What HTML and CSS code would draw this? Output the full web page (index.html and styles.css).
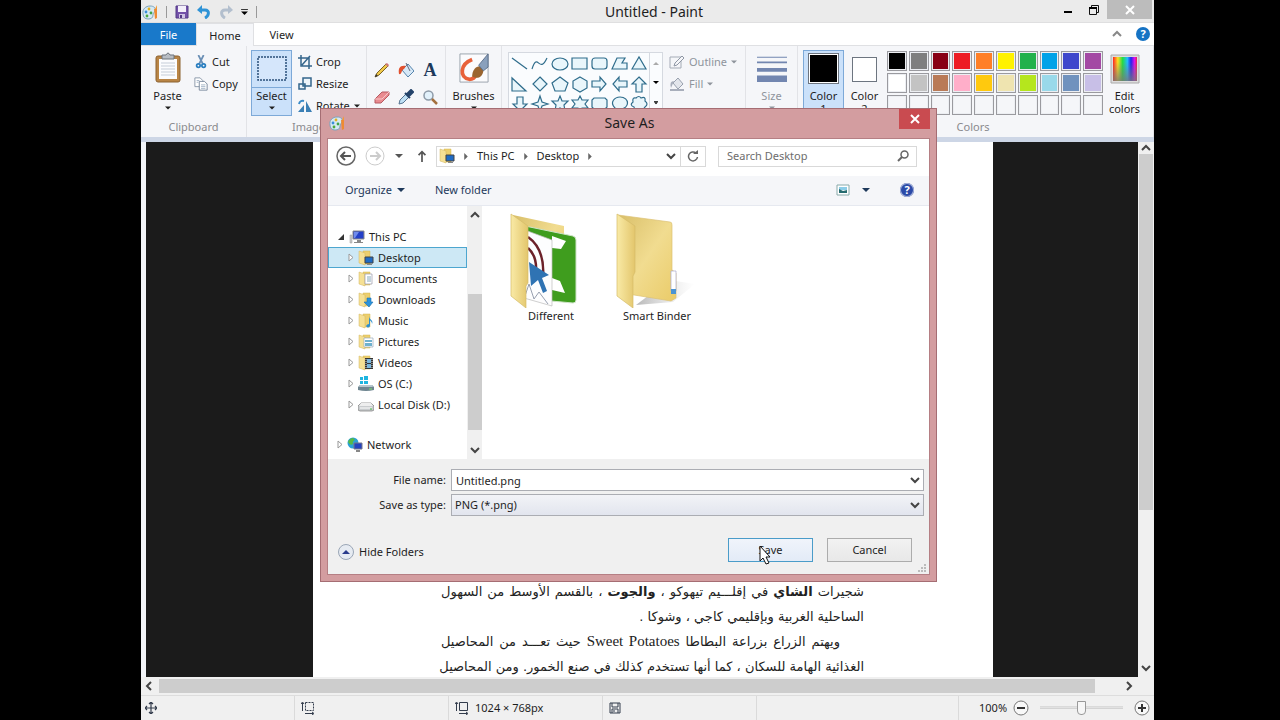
FILE: index.html
```html
<!DOCTYPE html>
<html lang="en">

	<head>
		<meta charset="UTF-8">
		<title>Untitled - Paint</title>
		<link rel="stylesheet" href="styles.css">
	</head>

	<body>
		<!-- shared icons -->
		<svg class="defs" aria-hidden="true">
			<defs>
				<linearGradient id="fold" x1="0" y1="0" x2="1" y2="0">
					<stop offset="0" stop-color="#f9eaa6" />
					<stop offset="1" stop-color="#e3c66c" />
				</linearGradient>
				<linearGradient id="foldBack" x1="0" y1="0" x2="1" y2="1">
					<stop offset="0" stop-color="#d9bf69" />
					<stop offset=".5" stop-color="#f1dc90" />
					<stop offset="1" stop-color="#eacb68" />
				</linearGradient>
				<linearGradient id="rainbow">
					<stop offset="0" stop-color="#f22" />
					<stop offset=".2" stop-color="#fd2" />
					<stop offset=".4" stop-color="#2d4" />
					<stop offset=".6" stop-color="#2bf" />
					<stop offset=".75" stop-color="#22e" />
					<stop offset=".9" stop-color="#d1e" />
					<stop offset="1" stop-color="#e24" />
				</linearGradient>
				<linearGradient id="fade" x1="0" y1="0" x2="0" y2="1">
					<stop offset=".2" stop-color="#777" stop-opacity="0" />
					<stop offset="1" stop-color="#777" stop-opacity=".8" />
				</linearGradient>
				<linearGradient id="shade" x1="0" y1="0" x2="1" y2="0">
					<stop offset="0" stop-color="#999" stop-opacity=".7" />
					<stop offset="1" stop-color="#ccc" stop-opacity="0" />
				</linearGradient>
			</defs>
			<symbol id="palette" viewBox="0 0 16 16">
				<path d="M1 10C0 5 4 2 8 2c4 0 6 2 5 5-1 2-2 2-2 4 0 3-2 4-5 4-3 0-5-2-5-5z" fill="#d5e9f3" stroke="#7aa3bd" />
				<circle cx="4" cy="8" r="1.4" fill="#3a8ed8" />
				<circle cx="7" cy="5" r="1.4" fill="#e0b020" />
				<circle cx="5" cy="12" r="1.4" fill="#4aa83c" />
				<circle cx="9" cy="9" r="1.4" fill="#3fa34a" />
				<path d="M13 5l2-4v4z" fill="#f29b38" />
				<path d="M12 5h3v9l-2 1z" fill="#ef8b32" />
			</symbol>
			<symbol id="chev" viewBox="0 0 10 10"><path d="M1 3l4 4 4-4" fill="none" stroke="#444" stroke-width="2" /></symbol>
			<symbol id="caret" viewBox="0 0 8 4"><path d="M0 0h8L4 4z" fill="currentColor" /></symbol>
			<symbol id="closed" viewBox="0 0 6 9"><path d="M1 1l4 3.500-4 3.500z" fill="#fff" stroke="#999" /></symbol>
			<symbol id="folder" viewBox="0 0 16 16">
				<path d="M5 1h7v13H5z" fill="#eccf6e" stroke="#d4b451" stroke-width=".5" />
				<path d="M1 1l6 2v12l-6-2z" fill="#f5e094" stroke="#d2b560" stroke-width=".5" />
			</symbol>
			<symbol id="deskfold" viewBox="0 0 16 16">
				<use href="#folder" />
				<path d="M7 7h8v6H7z" fill="#1f6bc4" stroke="#444" />
				<path d="M9 14h5v1H9z" fill="#888" />
			</symbol>
		</svg>

		<div class="paint">
			<header class="titlebar">
				<div class="quick">
					<svg class="i16"><use href="#palette" /></svg>
					<i class="bar"></i>
					<button aria-label="Save file"><svg viewBox="0 0 14 14" class="i14"><path d="M1 1h12v12H1z" fill="#7351a8" stroke="#533a86" /><path d="M3 1h8v6H3z" fill="#f3effa" /><path d="M4 9h6v4H4z" fill="#cfc4e3" /><path d="M5 10h2v3H5z" fill="#533a86" /></svg></button>
					<button aria-label="Undo"><svg viewBox="0 0 14 14" class="i14"><path d="M4 5h4c5 0 4 6 0 8" fill="none" stroke="#2f93d6" stroke-width="3" /><path d="M0 5l5-5v9z" fill="#2f93d6" /></svg></button>
					<button aria-label="Redo"><svg viewBox="0 0 14 14" class="i14"><path d="M10 5H6C1 5 2 11 6 13" fill="none" stroke="#b3bfce" stroke-width="3" /><path d="M14 5L9 0v9z" fill="#b3bfce" /></svg></button>
					<button aria-label="Customize"><svg viewBox="0 0 8 7" class="more"><path d="M0 0h8v1H0zM0 3h8L4 7z" /></svg></button>
					<i class="bar"></i>
				</div>
				<h1>Untitled - Paint</h1>
				<div class="sysbtns">
					<button aria-label="Minimize"><svg viewBox="0 0 10 10" class="i10"><path d="M1 6h8v2H1z" /></svg></button>
					<button aria-label="Restore"><svg viewBox="0 0 12 12" class="i12"><path d="M1.500 3.500h7v7h-7zM3.500 3V1.500h7v7H9" fill="none" stroke="#111" /><path d="M1 3h8v2H1z" /></svg></button>
					<button class="quit" aria-label="Close"><svg viewBox="0 0 10 10" class="i10"><path d="M1 1l8 8M9 1L1 9" stroke="#fff" stroke-width="2" /></svg></button>
				</div>
			</header>

			<nav class="tabs">
				<button class="file">File</button>
				<button class="on">Home</button>
				<button>View</button>
				<span class="tabs-end">
					<svg viewBox="0 0 10 10" class="i10"><path d="M1 7l4-4 4 4" fill="none" stroke="#888" stroke-width="2" /></svg>
					<button class="help" aria-label="Help">?</button>
				</span>
			</nav>

			<section class="ribbon">
				<div class="group g-clip">
					<div class="tools">
						<button class="big">
							<svg viewBox="0 0 26 32" class="pic"><rect x="1" y="4" width="24" height="26" rx="2" fill="#b98546" stroke="#8c6231" /><path d="M4 7h18v20H4z" fill="#fbfcfe" /><path d="M6 11h14M6 14h14M6 17h14M6 20h14M6 23h14" stroke="#c5cdd8" /><path d="M7 3h4q2-4 4 0h4v4H7z" fill="#b8bdc4" stroke="#6d747c" /></svg>
							<span>Paste</span>
							<svg class="caret"><use href="#caret" /></svg>
						</button>
						<div class="rows">
							<button><svg viewBox="0 0 14 16" class="i14"><path d="M4 0l5 10M10 0L5 10" stroke="#6b8fb5" stroke-width="2" /><circle cx="4" cy="12" r="2" fill="none" stroke="#2b7fc0" stroke-width="2" /><circle cx="10" cy="12" r="2" fill="none" stroke="#2b7fc0" stroke-width="2" /></svg>Cut</button>
							<button><svg viewBox="0 0 16 16" class="i14"><path d="M1 1h6l3 3v7H1z" fill="#fff" stroke="#8391a3" /><path d="M6 5h6l3 3v7H6z" fill="#fff" stroke="#708096" /><path d="M8 9h5M8 11h5M8 13h5M3 4h3M3 6h2" stroke="#9fb0c4" /></svg>Copy</button>
						</div>
					</div>
					<h2>Clipboard</h2>
				</div>

				<div class="group g-image">
					<div class="tools">
						<button class="big picked split">
							<svg viewBox="0 0 30 32" class="pic"><path d="M1 5h28v23H1z" fill="#d5e6fb" stroke="#2a4f7a" stroke-width="1.500" stroke-dasharray="2 1" /></svg>
							<span>Select</span>
							<svg class="caret"><use href="#caret" /></svg>
						</button>
						<div class="rows">
							<button><svg viewBox="0 0 14 14" class="i14"><path d="M3 0v11h11M0 3h11v11M4 10l8-9" fill="none" stroke="#35668c" stroke-width="1.500" /></svg>Crop</button>
							<button><svg viewBox="0 0 14 14" class="i14"><path d="M5 1h8v8H5zM1 7h6v5H1z" fill="#eef5fb" stroke="#35668c" stroke-width="1.500" /></svg>Resize</button>
							<button><svg viewBox="0 0 14 14" class="i14"><path d="M0 13h6V6zM8 13V2l6 11z" fill="#3a7fb5" /><path d="M1 5q1-4 5-3" fill="none" stroke="#3a8bc8" stroke-width="2" /></svg>Rotate<svg class="caret"><use href="#caret" /></svg></button>
						</div>
					</div>
					<h2>Image</h2>
				</div>

				<div class="group g-tools">
					<div class="toolgrid">
						<button aria-label="Pencil"><svg viewBox="0 0 16 16" class="i16"><path d="M1 15l2-4L12 2l2 2-9 9z" fill="#f0c94a" stroke="#7c6224" /><path d="M1 15l1-3 2 2z" fill="#333" /><path d="M11 2l2-1 2 2-1 2z" fill="#c77" /></svg></button>
						<button aria-label="Fill with color"><svg viewBox="0 0 16 16" class="i16"><path d="M4 8l6-6 6 7-6 6z" fill="#d6e8f7" stroke="#5684ad" /><path d="M8 1l4 8" stroke="#667" /><path d="M8 4C2 3 0 6 1 12c3 1 2-4 5-5z" fill="#e2512f" /></svg></button>
						<button aria-label="Text" class="letter">A</button>
						<button aria-label="Eraser"><svg viewBox="0 0 16 16" class="i16"><path d="M1 10l7-7 7 0v3l-8 8H1z" fill="#e98b90" stroke="#b65a62" /><path d="M1 10h7l7-7" fill="none" stroke="#f7c6c8" /></svg></button>
						<button aria-label="Color picker"><svg viewBox="0 0 16 16" class="i16"><path d="M1 15l1-4 6-6 3 3-6 6z" fill="#bfe0f5" stroke="#55738f" /><path d="M7 4l5 5M9 5l4-4 2 2-4 4z" fill="#25446b" stroke="#25446b" stroke-width="2" /></svg></button>
						<button aria-label="Magnifier"><svg viewBox="0 0 16 16" class="i16"><circle cx="6.500" cy="6.500" r="4.500" fill="#e2f1fb" stroke="#8d9aa8" stroke-width="1.500" /><path d="M10 10l5 5" stroke="#a4713f" stroke-width="2.500" /></svg></button>
					</div>
				</div>

				<div class="group g-brush">
					<button class="big">
						<svg viewBox="0 0 32 32" class="pic"><path d="M1 1h30v30H1z" fill="#fbfbfd" stroke="#98a0aa" /><path d="M14 7C1 12 0 26 11 28c4 0 6-2 7-5" fill="none" stroke="#e8613a" stroke-width="4" /><path d="M14 25c0-7 4-11 8-11l4 4c0 6-5 11-12 7z" fill="#9a6530" /><path d="M21 13L31 1v14l-5 4z" fill="#8aa0bc" stroke="#5b6f8b" /></svg>
						<span>Brushes</span>
						<svg class="caret"><use href="#caret" /></svg>
					</button>
				</div>

				<div class="group g-shapes">
					<div class="tools">
						<div class="gallery">
							<svg viewBox="0 0 140 62" class="shapes">
								<g fill="#e9f6fb" stroke="#2f6d8c" stroke-width="1.200">
									<path d="M3 5l15 11" />
									<path d="M23 16c6-18 7 6 15-11" fill="none" />
									<ellipse cx="51" cy="11" rx="8" ry="6" />
									<path d="M63 5h15v11H63z" />
									<rect x="83" y="5" width="15" height="11" rx="3" />
									<path d="M103 16l5-11h8l-3 5h5v6z" />
									<path d="M123 16l7-12 7 12z" />
									<path d="M3 25v13h14z" />
									<path d="M31 24l7 7-7 7-7-7z" />
									<path d="M51 24l8 6-3 8H46l-3-8z" />
									<path d="M71 24l7 4v7l-7 4-7-4v-7z" />
									<path d="M83 28h8v-4l6 7-6 7v-4h-8z" />
									<path d="M118 28h-8v-4l-6 7 6 7v-4h8z" />
									<path d="M130 24l7 7h-4v8h-6v-8h-4z" />
									<path d="M8 44h6v7h4l-7 7-7-7h4z" />
									<path d="M31 43l2 6 6 2-6 2-2 6-2-6-6-2 6-2z" />
									<path d="M51 43l2 5h6l-4 4 1 6-5-3-5 3 1-6-4-4h6z" />
									<path d="M71 43l2 4h6l-3 4 3 4h-6l-2 4-2-4h-6l3-4-3-4h6z" />
									<path d="M85 45h11l2 2v7l-2 2h-7l-4 3v-3l-2-2v-7z" />
									<path d="M106 59v-4c-6-6 0-11 5-11 10 0 10 12 0 12z" />
									<path d="M127 45q3-3 5 0 5-2 4 3 4 3 0 6-2 4-6 2-4 3-5-2-5-2-1-5-1-5 3-4z" />
								</g>
							</svg>
							<div class="spin">
								<svg viewBox="0 0 8 4"><path d="M1 4h6L4 1z" fill="#aaa" /></svg>
								<svg viewBox="0 0 8 4"><path d="M1 0h6L4 3z" /></svg>
								<svg viewBox="0 0 8 6"><path d="M1 0h6v1H1zM1 2h6L4 5z" /></svg>
							</div>
						</div>
						<div class="rows faint">
							<button><svg viewBox="0 0 16 16" class="i16"><path d="M1 3h11v11H1z" fill="none" stroke="#a4abb6" /><path d="M5 12l1-3 7-7 2 2-7 7z" fill="#f5f6f9" stroke="#8f97a5" /></svg>Outline<svg class="caret"><use href="#caret" /></svg></button>
							<button><svg viewBox="0 0 16 16" class="i16"><path d="M4 7l5-5 5 6-5 5z" fill="#e2e5eb" stroke="#98a0ae" /><path d="M1 13h14v2H1zM5 5Q0 5 2 12z" fill="#a8aebb" /></svg>Fill<svg class="caret"><use href="#caret" /></svg></button>
						</div>
					</div>
				</div>

				<div class="group g-size">
					<button class="big faint">
						<svg viewBox="0 0 32 32" class="pic"><path d="M0 4h32v1H0zM0 9h32v2H0zM0 16h32v4H0zM0 24h32v7H0z" fill="#7286b0" /></svg>
						<span>Size</span>
						<svg class="caret"><use href="#caret" /></svg>
					</button>
				</div>

				<div class="group g-colors">
					<div class="tools">
						<button class="big picked"><i class="well black"></i><span>Color<br>1</span></button>
						<button class="big"><i class="well small white"></i><span>Color<br>2</span></button>
						<div class="swatches">
							<button class="black" aria-label="Black"></button>
							<button class="gray" aria-label="Gray"></button>
							<button class="darkred" aria-label="Dark red"></button>
							<button class="red" aria-label="Red"></button>
							<button class="orange" aria-label="Orange"></button>
							<button class="yellow" aria-label="Yellow"></button>
							<button class="green" aria-label="Green"></button>
							<button class="turquoise" aria-label="Turquoise"></button>
							<button class="indigo" aria-label="Indigo"></button>
							<button class="purple" aria-label="Purple"></button>
							<button class="white" aria-label="White"></button>
							<button class="lightgray" aria-label="Light gray"></button>
							<button class="brown" aria-label="Brown"></button>
							<button class="rose" aria-label="Rose"></button>
							<button class="gold" aria-label="Gold"></button>
							<button class="lightyellow" aria-label="Light yellow"></button>
							<button class="lime" aria-label="Lime"></button>
							<button class="lightturquoise" aria-label="Light turquoise"></button>
							<button class="bluegray" aria-label="Blue-gray"></button>
							<button class="lavender" aria-label="Lavender"></button>
							<button aria-label="Custom 1"></button>
							<button aria-label="Custom 2"></button>
							<button aria-label="Custom 3"></button>
							<button aria-label="Custom 4"></button>
							<button aria-label="Custom 5"></button>
							<button aria-label="Custom 6"></button>
							<button aria-label="Custom 7"></button>
							<button aria-label="Custom 8"></button>
							<button aria-label="Custom 9"></button>
							<button aria-label="Custom 10"></button>
						</div>
						<button class="big edit">
							<svg viewBox="0 0 30 32" class="pic"><path d="M1 3h28v28H1z" fill="#ddd" stroke="#aaa" /><path d="M3 5h24v24H3z" fill="url(#rainbow)" /><path d="M3 5h24v24H3z" fill="url(#fade)" /></svg>
							<span>Edit<br>colors</span>
						</button>
					</div>
					<h2>Colors</h2>
				</div>
			</section>

			<main class="work">
				<div class="canvas">
					<div class="paper" lang="ar" dir="rtl">
						<p>شجيرات <b>الشاي</b> في إقلـــيم تيهوكو ، <b>والجوت</b> ، بالقسم الأوسط من السهول</p>
						<p class="last">الساحلية الغربية وبإقليمي كاجي ، وشوكا .</p>
						<p class="indent">ويهتم الزراع بزراعة البطاطا <span class="latin">Sweet Potatoes</span> حيث تعـــد من المحاصيل</p>
						<p>الغذائية الهامة للسكان ، كما أنها تستخدم كذلك في صنع الخمور. ومن المحاصيل</p>
					</div>
				</div>
				<div class="vscroll">
					<svg viewBox="0 0 10 10" class="i10"><path d="M1 7l4-4 4 4" fill="none" stroke="#444" stroke-width="2" /></svg>
					<i class="thumb"></i>
					<svg class="i10"><use href="#chev" /></svg>
				</div>
			</main>
			<div class="hscroll">
				<svg viewBox="0 0 10 10" class="i10"><path d="M7 1L3 5l4 4" fill="none" stroke="#444" stroke-width="2" /></svg>
				<i class="thumb"></i>
				<svg viewBox="0 0 10 10" class="i10"><path d="M3 1l4 4-4 4" fill="none" stroke="#444" stroke-width="2" /></svg>
			</div>

			<footer class="status">
				<div class="cell"><svg viewBox="0 0 12 12" class="i12"><path d="M6 0v12M0 6h12M4 2l2-2 2 2M4 10l2 2 2-2M2 4L0 6l2 2M10 4l2 2-2 2" fill="none" stroke="#333c4c" stroke-width="1.200" /></svg></div>
				<div class="cell"><svg viewBox="0 0 14 14" class="i14"><path d="M4.500 1.500h8v8h-8z" fill="none" stroke="#333c4c" stroke-dasharray="2 1" /><path d="M1.500 10V2M0 3l1.500-2L3 3M4 12.500h8M11 11l2 1.500-2 1.500" fill="none" stroke="#333c4c" /></svg></div>
				<div class="cell"><svg viewBox="0 0 14 14" class="i14"><path d="M4.500 1.500h8v8h-8z" fill="none" stroke="#333c4c" /><path d="M1.500 10V2M0 3l1.500-2L3 3M4 12.500h8M11 11l2 1.500-2 1.500" fill="none" stroke="#333c4c" /></svg>1024 × 768px</div>
				<div class="cell"><svg viewBox="0 0 12 12" class="i12"><path d="M1 1h10v10H1zM3 1v4h6V1M3 11V7h6v4M5 8v2" fill="none" stroke="#333c4c" /></svg></div>
				<div class="cell wide"></div>
				<div class="zoom">
					<label for="zoom">100%</label>
					<button class="round" aria-label="Zoom out"><svg viewBox="0 0 16 16" class="i16"><circle cx="8" cy="8" r="7" fill="#f8f8f8" stroke="#777" /><path d="M4 8h8" stroke="#333" stroke-width="2" /></svg></button>
					<input type="range" id="zoom" min="0" max="100" value="50">
					<button class="round" aria-label="Zoom in"><svg viewBox="0 0 16 16" class="i16"><circle cx="8" cy="8" r="7" fill="#f8f8f8" stroke="#777" /><path d="M4 8h8M8 4v8" stroke="#333" stroke-width="2" /></svg></button>
				</div>
			</footer>

			<!-- save dialog -->
			<div class="dialog" role="dialog" aria-labelledby="dlgTitle">
				<div class="dlg-title">
					<svg class="i16"><use href="#palette" /></svg>
					<h2 id="dlgTitle">Save As</h2>
					<button class="close" aria-label="Close dialog"><svg viewBox="0 0 10 10" class="i10"><path d="M1 1l8 8M9 1L1 9" stroke="#fff" stroke-width="2" /></svg></button>
				</div>
				<div class="dlg-body">
					<div class="address">
						<button aria-label="Back"><svg viewBox="0 0 20 20" class="i20"><circle cx="10" cy="10" r="9" fill="#fff" stroke="#666" stroke-width="1.500" /><path d="M15 10H6M9 6l-4 4 4 4" fill="none" stroke="#555" stroke-width="2" /></svg></button>
						<button aria-label="Forward"><svg viewBox="0 0 20 20" class="i20"><circle cx="10" cy="10" r="9" fill="#fff" stroke="#ccc" /><path d="M5 10h9M11 6l4 4-4 4" fill="none" stroke="#ccc" stroke-width="2" /></svg></button>
						<button class="hist" aria-label="Recent locations"><svg class="caret"><use href="#caret" /></svg></button>
						<button class="up" aria-label="Up"><svg viewBox="0 0 12 14" class="i12"><path d="M6 14V2M2 6l4-4 4 4" fill="none" stroke="#555" stroke-width="2" /></svg></button>
						<div class="crumbs">
							<svg class="i16"><use href="#deskfold" /></svg>
							<svg viewBox="0 0 4 8" class="arr"><path d="M0 0l4 4-4 4z" /></svg>
							<a href="#pc">This PC</a>
							<svg viewBox="0 0 4 8" class="arr"><path d="M0 0l4 4-4 4z" /></svg>
							<a href="#desktop">Desktop</a>
							<svg viewBox="0 0 4 8" class="arr"><path d="M0 0l4 4-4 4z" /></svg>
							<svg class="i10 push"><use href="#chev" /></svg>
						</div>
						<button class="reload" aria-label="Refresh"><svg viewBox="0 0 12 12" class="i12"><path d="M9 3a4.500 4.500 0 1 0 1.500 4" fill="none" stroke="#666" stroke-width="1.500" /><path d="M6 4h5V0z" fill="#666" /></svg></button>
						<div class="search">
							<input type="text" placeholder="Search Desktop" aria-label="Search Desktop">
							<svg viewBox="0 0 12 12" class="i12"><circle cx="7.500" cy="4.500" r="3.500" fill="none" stroke="#666" stroke-width="1.500" /><path d="M5 7l-4 4" stroke="#666" stroke-width="2" /></svg>
						</div>
					</div>

					<div class="commands">
						<button>Organize<svg class="caret"><use href="#caret" /></svg></button>
						<button>New folder</button>
						<button class="push" aria-label="Change view"><svg viewBox="0 0 14 12" class="i14"><path d="M1 1h12v10H1z" fill="#fff" stroke="#8aa" /><path d="M3 3h8v3H3z" fill="#8ccde8" /><path d="M3 5l4 2 4-1v3H3z" fill="#256b6f" /></svg></button>
						<button aria-label="More views"><svg class="caret"><use href="#caret" /></svg></button>
						<button class="help dark" aria-label="Dialog help">?</button>
					</div>

					<div class="browse">
						<ul class="tree">
							<li class="root"><svg viewBox="0 0 8 8" class="i8"><path d="M7 1v6H1z" fill="#333" /></svg><svg viewBox="0 0 16 16" class="i16"><path d="M4 2h11v8H4z" fill="#2440c8" stroke="#888" /><path d="M5 3h5l-4 6H5z" fill="#6f8bec" /><path d="M8 11h4v2H8zM5 13h9v1H5z" fill="#888" /><path d="M1 6h2v8H1z" fill="#ccc" stroke="#999" stroke-width=".5" /></svg>This PC</li>
							<li class="sel"><svg class="exp"><use href="#closed" /></svg><svg class="i16"><use href="#deskfold" /></svg>Desktop</li>
							<li><svg class="exp"><use href="#closed" /></svg><svg viewBox="0 0 16 16" class="i16"><use href="#folder" /><path d="M7 3h7v10H7z" fill="#fff" stroke="#99a" stroke-width=".7" /><path d="M9 6h4M9 8h4M9 10h4" stroke="#8ab" /></svg>Documents</li>
							<li><svg class="exp"><use href="#closed" /></svg><svg viewBox="0 0 16 16" class="i16"><use href="#folder" /><path d="M9 6h4v4h2l-4 5-5-5h3z" fill="#2b93dc" stroke="#1c6fae" stroke-width=".6" /></svg>Downloads</li>
							<li><svg class="exp"><use href="#closed" /></svg><svg viewBox="0 0 16 16" class="i16"><use href="#folder" /><path d="M11 3c0 4 5 4 3 8 0-3-2-3-2-4v6q-2 3-4 0 1-2 3-2z" fill="#2b8fd0" /></svg>Music</li>
							<li><svg class="exp"><use href="#closed" /></svg><svg viewBox="0 0 16 16" class="i16"><use href="#folder" /><path d="M6 4h9v9H6z" fill="#fff" stroke="#9ab" stroke-width=".7" /><path d="M7 6h7v2H7zM7 9h7v3H7z" fill="#6fb1cf" /></svg>Pictures</li>
							<li><svg class="exp"><use href="#closed" /></svg><svg viewBox="0 0 16 16" class="i16"><use href="#folder" /><path d="M7 3h8v11H7z" fill="#333" /><path d="M9 4h4v4H9zM9 9h4v4H9z" fill="#79b6dd" /><path d="M8 4v10M14 4v10" stroke="#ddd" stroke-dasharray="1 1" /></svg>Videos</li>
							<li><svg class="exp"><use href="#closed" /></svg><svg viewBox="0 0 16 16" class="i16"><path d="M2 1h3v3H2zM6 0h4v4H6zM2 5h3v3H2zM6 5h4v3H6z" fill="#1fb5e0" /><path d="M2 9h12l2 2v3q-8 2-16 0v-3z" fill="#6e8590" /><path d="M2 9h12l1 2H1z" fill="#b6c6cd" /><path d="M11 13h3" stroke="#7ee06a" /></svg>OS (C:)</li>
							<li><svg class="exp"><use href="#closed" /></svg><svg viewBox="0 0 16 16" class="i16"><path d="M3 6h10l3 3v4l-2 1H2l-2-1V9z" fill="#c9ccce" stroke="#777" stroke-width=".7" /><path d="M3 6h10l2 3H1z" fill="#eee" /><path d="M2 11h12" stroke="#fff" /><path d="M12 12h2" stroke="#4b4" /></svg>Local Disk (D:)</li>
							<li class="root net"><svg class="exp"><use href="#closed" /></svg><svg viewBox="0 0 16 16" class="i16"><circle cx="6" cy="6" r="5.500" fill="#2aa0d8" /><path d="M2 3q4-4 6 0-3 1-2 4-3 2-5-2z" fill="#55b948" /><path d="M7 6h8v6H7z" fill="#2443c0" stroke="#778" /><path d="M9 13h4v2H9z" fill="#888" /></svg>Network</li>
						</ul>
						<div class="vscroll side">
							<svg viewBox="0 0 10 10" class="i10"><path d="M1 7l4-4 4 4" fill="none" stroke="#444" stroke-width="2" /></svg>
							<i class="thumb"></i>
							<svg class="i10"><use href="#chev" /></svg>
						</div>
						<div class="files">
							<figure>
								<svg viewBox="6 0 84 96" class="thumbpic">
									<path d="M10 3l51 11v64H20z" fill="url(#foldBack)" />
									<path d="M22 14l48 10q3 1 3 4v60q0 3-3 3l-44-4z" fill="#3f9d1e" stroke="#cfe3c8" />
									<path d="M49 24l14 5-5 8-9-1zM49 66l8 3 5 12-13-3z" fill="#fff" />
									<path d="M22 18l27 10v66l-28-8z" fill="#fdfdfe" stroke="#bbb" stroke-width=".7" />
									<path d="M25 25q17 12 15 40M25 36q9 8 8 23" fill="none" stroke="#6c2129" stroke-width="2.500" />
									<path d="M26 50l20 13-7 3 5 13-4 2-5-13-7 6z" fill="#2f73b3" />
									<path d="M22 84l4-12 5 15 5-7 9 12" fill="none" stroke="#98a0b0" />
									<path d="M8 2l17 12v57l-2 3v22L8 84z" fill="url(#fold)" stroke="#d6bc69" stroke-width=".7" />
								</svg>
								<figcaption>Different</figcaption>
							</figure>
							<figure>
								<svg viewBox="6 0 84 96" class="thumbpic">
									<path d="M60 68l26 4-22 18-37 3z" fill="url(#shade)" />
									<path d="M9 3l52 7q2 0 2 3v45l4 3v25l-5 3-43-7z" fill="url(#foldBack)" stroke="#dcc274" stroke-width=".7" />
									<path d="M62 59h5v20h-5z" fill="#fff" stroke="#aac" stroke-width=".7" />
									<path d="M62 77h5v5h-5z" fill="#4a94d4" />
									<path d="M8 2l18 12v46l-2 4v32L8 84z" fill="url(#fold)" stroke="#d6bc69" stroke-width=".7" />
								</svg>
								<figcaption>Smart Binder</figcaption>
							</figure>
						</div>
					</div>

					<form class="save">
						<label for="fname">File name:</label>
						<div class="field">
							<input type="text" id="fname" value="Untitled.png">
							<svg class="i10"><use href="#chev" /></svg>
						</div>
						<label for="ftype">Save as type:</label>
						<div class="field type">
							<select id="ftype"><option>PNG (*.png)</option></select>
							<svg class="i10"><use href="#chev" /></svg>
						</div>
					</form>
					<div class="actions">
						<button class="hide"><svg viewBox="0 0 16 16" class="i16"><circle cx="8" cy="8" r="7.500" fill="#e6ebf2" stroke="#9aa6b6" /><path d="M4 10h8L8 6z" fill="#2a3c8c" /></svg>Hide Folders</button>
						<button class="btn default">Save</button>
						<button class="btn">Cancel</button>
					</div>
					<svg viewBox="0 0 8 8" class="grip"><path d="M6 0h2v2H6zM3 3h2v2H3zM6 3h2v2H6zM0 6h2v2H0zM3 6h2v2H3zM6 6h2v2H6z" fill="#bbb" /></svg>
					<svg viewBox="0 0 12 20" class="cursor"><path d="M1 1v15l3-3 3 6 3-1-3-6h4z" fill="#fff" stroke="#111" /></svg>
				</div>
			</div>
		</div>
	</body>

</html>
```
FILE: styles.css
```css
* {
	box-sizing: border-box;
}

body {
	margin: 0;
	background: #000;
	color: #1e1e1e;
	font: 11px/16px "Noto Sans", "Open Sans", sans-serif;
}

h1,
h2,
p,
ul,
figure {
	margin: 0;
	padding: 0;
	font-weight: normal;
}

button {
	display: flex;
	align-items: center;
	padding: 0;
	border: 0;
	background: none;
	color: inherit;
	font: inherit;
}

svg {
	flex: none;
	display: block;
}

.defs {
	position: absolute;
	width: 0;
	height: 0;
}

.i8 { width: 8px; height: 8px; }
.i10 { width: 10px; height: 10px; }
.i12 { width: 12px; height: 12px; }
.i14 { width: 14px; height: 14px; }
.i16 { width: 16px; height: 16px; }
.i20 { width: 20px; height: 20px; }

.caret {
	width: 6px;
	height: 4px;
}

.push {
	margin-left: auto;
}

/* main window */
.paint {
	position: relative;
	display: flex;
	flex-direction: column;
	height: 100vh;
	margin: 0 126px 0 141px;
	background: #f5f6f9;
	overflow: hidden;
}

.titlebar {
	display: grid;
	grid-template-columns: 1fr auto 1fr;
	height: 23px;
	padding-left: 1px;
	background: #ebebeb;
	border-bottom: 1px solid #dfdfe0;
}

.quick {
	display: flex;
	align-items: center;
	gap: 8px;
}

.quick .bar {
	width: 1px;
	height: 12px;
	background: #999;
}

.quick .more {
	width: 7px;
	height: 6px;
}

.titlebar h1 {
	padding-left: 12px;
	font-size: 14px;
	line-height: 23px;
}

.sysbtns {
	display: flex;
	justify-content: flex-end;
	align-items: flex-start;
	padding-right: 2px;
}

.sysbtns button {
	width: 26px;
	height: 19px;
	justify-content: center;
}

.sysbtns .quit {
	width: 45px;
	background: #bcbcbc;
}

.tabs {
	display: flex;
	height: 23px;
	background: #fff;
	border-bottom: 1px solid #dfe0e3;
}

.tabs > button {
	width: 55px;
	padding-top: 2px;
	justify-content: center;
}

.tabs .file {
	background: #1979ca;
	color: #fff;
}

.tabs .on {
	width: 58px;
	height: 23px;
	background: #f5f6f9;
	border: 1px solid #dfe0e3;
	border-bottom: 0;
}

.tabs-end {
	display: flex;
	align-items: center;
	gap: 14px;
	margin-left: auto;
	padding-right: 4px;
}

.help {
	width: 14px;
	height: 14px;
	justify-content: center;
	border-radius: 50%;
	background: #1673c4;
	color: #fff;
	font-weight: bold;
}

.help.dark {
	background: #2b4aa8;
	box-shadow: inset 0 0 0 1px #a9b5da;
}

/* ribbon */
.ribbon {
	display: flex;
	height: 91px;
	line-height: 12px;
}

.group {
	display: flex;
	flex: none;
	flex-direction: column;
	padding-top: 4px;
	border-right: 1px solid #e2e3e7;
}

.group h2 {
	margin-top: auto;
	padding-bottom: 4px;
	color: #8a8a8e;
	font-size: 11px;
	line-height: 12px;
	text-align: center;
}

.g-clip { width: 106px; padding-left: 6px; }
.g-clip h2 { padding-right: 6px; }
.g-image { width: 120px; padding-left: 4px; }
.g-tools { width: 79px; }
.g-brush { width: 56px; align-items: center; }
.g-shapes { width: 244px; padding-left: 6px; }
.g-size { width: 52px; align-items: center; }
.g-colors { flex: 1; padding-left: 5px; }
.g-colors h2 { padding-right: 10px; }

.tools {
	display: flex;
}

.big {
	flex: none;
	flex-direction: column;
	width: 41px;
	height: 66px;
	border: 1px solid transparent;
	line-height: 13px;
}

.big .pic {
	width: 30px;
	height: 32px;
	margin: 1px 0 5px;
}

.g-clip .pic {
	width: 26px;
}

.big .caret {
	margin-top: 4px;
}

.picked {
	border-color: #7da9d8;
	background: #cbe1fa;
}

.split {
	background: linear-gradient(#cbe1fa 36px, #7da9d8 36px, #7da9d8 37px, #cbe1fa 37px);
}

.rows {
	display: flex;
	flex-direction: column;
	padding: 1px 0 0 6px;
}

.rows button {
	height: 22px;
	gap: 4px;
	white-space: nowrap;
}

.faint {
	color: #8f949c;
}

.toolgrid {
	display: grid;
	grid-template-columns: repeat(3, 16px);
	grid-auto-rows: 16px;
	gap: 11px 8px;
	padding: 12px 0 0 7px;
}

.letter {
	justify-content: center;
	color: #1d3a5c;
	font: bold 18px/16px "Liberation Serif", serif;
}

.gallery {
	display: flex;
	width: 155px;
	height: 66px;
	margin-top: 2px;
	border: 1px solid #d5d9e0;
	background: #fafcfe;
}

.shapes {
	width: 140px;
	height: 62px;
}

.spin {
	display: flex;
	flex: 1;
	flex-direction: column;
	align-items: center;
	gap: 16px;
	padding-top: 8px;
	border-left: 1px solid #d5d9e0;
}

.spin svg {
	width: 8px;
	height: 4px;
}

.well {
	width: 31px;
	height: 31px;
	margin: 2px 0 5px;
	border: 1px solid #6d7580;
	box-shadow: inset 0 0 0 1px #fff;
}

.well.small {
	width: 25px;
	height: 25px;
	margin: 6px 0 7px;
}

.swatches {
	display: grid;
	flex: 1;
	grid-template-columns: repeat(10, 1fr);
	grid-auto-rows: 20px;
	gap: 2px;
	margin: 1px 1px 0 2px;
}

.swatches button {
	border: 1px solid #9a9a9f;
	box-shadow: inset 0 0 0 1px #eceef2;
}

.black { background: #000; }
.gray { background: #7f7f7f; }
.darkred { background: #880015; }
.red { background: #ed1c24; }
.orange { background: #ff7f27; }
.yellow { background: #fff200; }
.green { background: #22b14c; }
.turquoise { background: #00a2e8; }
.indigo { background: #3f48cc; }
.purple { background: #a349a4; }
.white { background: #fff; }
.lightgray { background: #c3c3c3; }
.brown { background: #b97a57; }
.rose { background: #ffaec9; }
.gold { background: #ffc90e; }
.lightyellow { background: #efe4b0; }
.lime { background: #b5e61d; }
.lightturquoise { background: #99d9ea; }
.bluegray { background: #7092be; }
.lavender { background: #c8bfe7; }

.edit {
	margin-right: 8px;
}

/* drawing area */
.work {
	display: flex;
	flex: 1;
	min-height: 0;
	border-top: 5px solid #cdd6e6;
	background: #f3f5f9;
}

.canvas {
	display: flex;
	flex: 1;
	min-width: 0;
	margin-left: 5px;
	padding: 0 145px 0 167px;
	background: #1b1b1b;
	overflow: hidden;
}

.paper {
	flex: 1;
	min-width: 0;
	padding: 437px 129px 0 128px;
	background: #fff;
	color: #222;
	font: 13px/25px "DejaVu Sans", "Liberation Serif", serif;
}

.paper p {
	text-align-last: justify;
	white-space: nowrap;
}

.paper .last {
	text-align-last: auto;
}

.paper .indent {
	padding-right: 24px;
}

.latin {
	font-family: "Liberation Serif", serif;
	font-size: 15px;
	line-height: 16px;
}

.vscroll,
.hscroll {
	display: flex;
	align-items: center;
	background: #f0f0f0;
}

.vscroll {
	flex: none;
	flex-direction: column;
	width: 16px;
	padding: 1px 0 4px;
}

.vscroll .thumb {
	width: 14px;
	height: 356px;
	margin: 1px 0 auto;
	background: #cdcdcd;
}

.hscroll {
	height: 18px;
	padding: 0 20px 0 3px;
}

.hscroll .thumb {
	flex: 1;
	height: 14px;
	margin: 0 29px 0 5px;
	background: #cdcdcd;
}

/* status bar */
.status {
	display: flex;
	height: 25px;
	border-top: 1px solid #ddd;
	background: #f0f0f0;
}

.cell {
	display: flex;
	flex: none;
	align-items: center;
	gap: 6px;
	width: 154px;
	padding-left: 6px;
	border-right: 1px solid #dadada;
}

.cell:first-child {
	padding-left: 4px;
}

.cell.wide {
	flex: 1;
}

.zoom {
	display: flex;
	align-items: center;
	gap: 6px;
	width: 195px;
	padding: 0 4px 0 20px;
}

.zoom input {
	flex: 1;
	min-width: 0;
	height: 16px;
	margin: 0 5px;
	appearance: none;
	background: linear-gradient(transparent 6px, #ccc 6px, #e8e8e8 7px, #ccc 9px, transparent 9px);
}

.zoom input::-webkit-slider-thumb {
	appearance: none;
	width: 9px;
	height: 14px;
	border: 1px solid #999;
	border-radius: 0 0 4px 4px;
	background: #f6f6f6;
}

/* save dialog */
.dialog {
	position: absolute;
	top: 108px;
	left: 179px;
	right: 217px;
	padding: 0 6px 6px;
	border: 1px solid #a56d73;
	background: #d39da0;
}

.dlg-title {
	display: grid;
	grid-template-columns: 1fr auto 1fr;
	height: 29px;
	padding-left: 2px;
}

.dlg-title .i16 {
	margin-top: 6px;
}

.dlg-title h2 {
	font-size: 14px;
	line-height: 28px;
}

.close {
	justify-self: end;
	justify-content: center;
	width: 31px;
	height: 20px;
	background: #c94b50;
}

.dlg-body {
	position: relative;
	border: 1px solid #b57f84;
	background: #f0f0f0;
}

.address {
	display: flex;
	align-items: center;
	height: 37px;
	padding: 0 12px 3px 8px;
	background: #fff;
}

.address > button {
	margin-right: 9px;
}

.address > .hist {
	margin: 0 13px 0 1px;
	color: #555;
}

.address > .up {
	margin-right: 8px;
}

.hist .caret {
	width: 8px;
}

.crumbs,
.search {
	display: flex;
	align-items: center;
	height: 21px;
	border: 1px solid #d9d9d9;
}

.crumbs {
	flex: 1;
	gap: 9px;
	padding: 0 4px 0 2px;
}

.crumbs a {
	color: inherit;
	text-decoration: none;
}

.arr {
	width: 4px;
	height: 7px;
	fill: #666;
}

.address > .reload {
	justify-content: center;
	width: 25px;
	height: 21px;
	margin-right: 12px;
	border: 1px solid #d9d9d9;
	border-left: 0;
}

.search {
	width: 199px;
	padding: 0 7px 0 8px;
}

.search input {
	flex: 1;
	min-width: 0;
	padding: 0;
	border: 0;
	outline: 0;
	background: none;
	font: inherit;
}

.search input::placeholder {
	color: #6d6d6d;
}

.commands {
	display: flex;
	align-items: center;
	gap: 18px;
	height: 30px;
	padding: 0 15px 2px 17px;
	border-bottom: 1px solid #e6e9f0;
	background: #f5f6f9;
	color: #1e395b;
}

.commands button {
	gap: 5px;
}

.commands button:nth-child(2) {
	margin-left: 12px;
}

.commands .caret {
	width: 8px;
}

.commands .push {
	margin-right: -6px;
}

.commands .help {
	margin-left: 12px;
}

.browse {
	display: flex;
	height: 253px;
	background: #fff;
}

.tree {
	width: 139px;
	padding: 20px 0 0;
	list-style: none;
}

.tree li {
	display: flex;
	align-items: center;
	gap: 4px;
	height: 21px;
	padding-left: 19px;
	border: 1px solid transparent;
	white-space: nowrap;
}

.tree .root {
	padding-left: 8px;
}

.tree .sel {
	border-color: #4da6cf;
	background: #cde8f5;
}

.tree .net {
	margin-top: 19px;
}

.exp {
	width: 6px;
	height: 9px;
}

.vscroll.side {
	width: 15px;
	padding: 4px 0;
}

.side .thumb {
	height: 136px;
	margin: auto 0 15px;
}

.files {
	display: flex;
	gap: 22px;
	padding: 6px 0 0 27px;
}

.files figure {
	width: 84px;
	text-align: center;
}

.thumbpic {
	width: 84px;
	height: 96px;
}

.save {
	display: grid;
	grid-template-columns: 118px 1fr;
	gap: 3px 5px;
	padding: 10px 5px 0 0;
}

.save label {
	line-height: 22px;
	text-align: right;
}

.field {
	display: flex;
	align-items: center;
	height: 22px;
	padding-right: 3px;
	border: 1px solid #abadb3;
	background: #fff;
}

.field.type {
	background: linear-gradient(#f2f3f7, #e2e5ee);
}

.field input,
.field select {
	flex: 1;
	height: 20px;
	padding: 0 4px;
	border: 0;
	outline: 0;
	appearance: none;
	background: none;
	color: inherit;
	font: inherit;
}

.field select {
	padding: 0 3px;
}

.actions {
	display: flex;
	align-items: center;
	gap: 14px;
	padding: 22px 17px 12px 10px;
}

.hide {
	gap: 5px;
	margin-right: auto;
	padding-top: 4px;
}

.btn {
	justify-content: center;
	width: 85px;
	height: 24px;
	border: 1px solid #acacac;
	background: linear-gradient(#f2f2f2, #e8e8e8);
}

.btn.default {
	border-color: #4a9cc9;
	background: linear-gradient(#f0f4fb, #e3ebf7);
}

.grip {
	position: absolute;
	right: 3px;
	bottom: 2px;
	width: 8px;
	height: 8px;
}

.cursor {
	position: absolute;
	right: 158px;
	bottom: 9px;
	width: 12px;
	height: 20px;
}
```
